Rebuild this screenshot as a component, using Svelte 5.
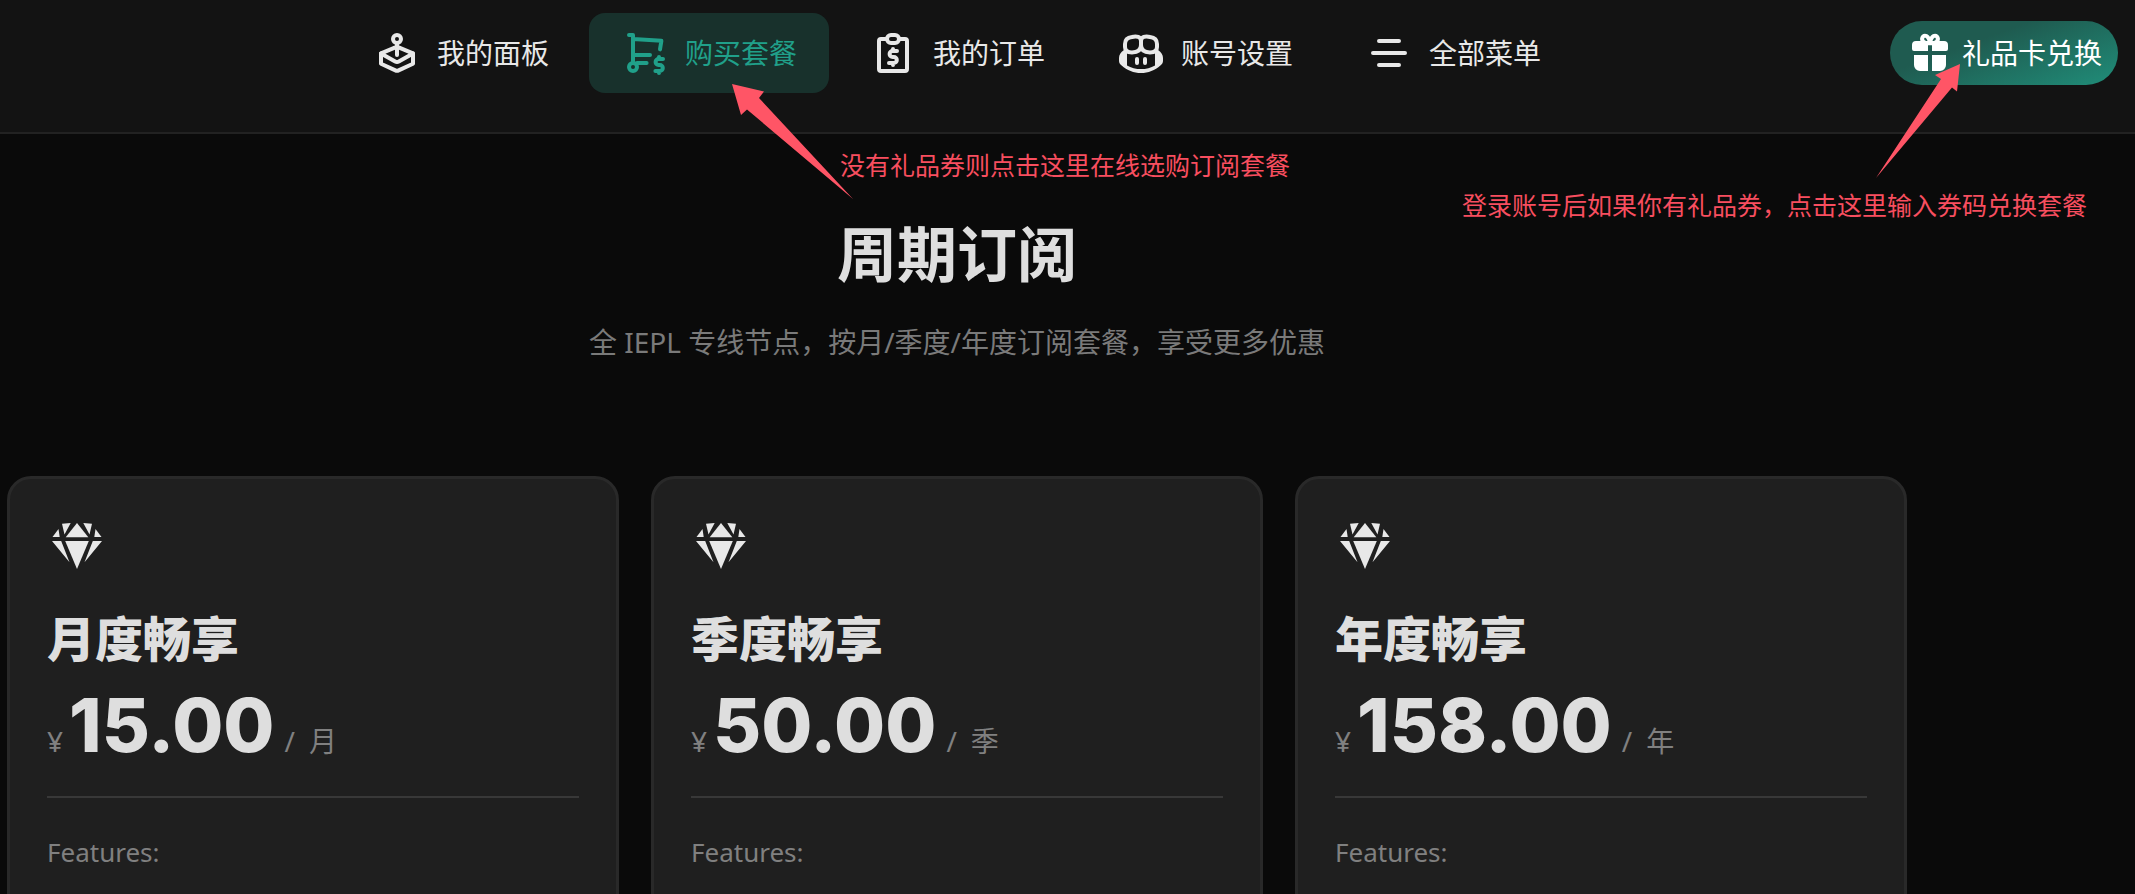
<script>
  const navItems = [
    { id: 'dashboard', label: '我的面板' },
    { id: 'shop', label: '购买套餐' },
    { id: 'orders', label: '我的订单' },
    { id: 'account', label: '账号设置' },
    { id: 'menu', label: '全部菜单' },
  ];

  const plans = [
    { name: '月度畅享', price: '15.00', unit: '月' },
    { name: '季度畅享', price: '50.00', unit: '季' },
    { name: '年度畅享', price: '158.00', unit: '年' },
  ];

  let active = $state('shop');
</script>

<div class="page">
  <header class="topbar">
    <nav class="nav">
      {#each navItems as item (item.id)}
        <a
          class="nav-item"
          class:active={active === item.id}
          href="#{item.id}"
          onclick={() => (active = item.id)}
        >
          <svg class="icon" viewBox="0 0 24 24" aria-hidden="true">
            {#if item.id === 'dashboard'}
              <circle cx="12" cy="5" r="2" />
              <path d="M12 7v6" />
              <path d="M11.2 9.2 4 12.2l7.1 4.1q.9.5 1.8 0L20 12.2l-7.2-3" />
              <path d="M4 12.2v5.2l7.2 3.3q.8.4 1.6 0l7.2-3.3v-5.2" />
            {:else if item.id === 'shop'}
              <path d="M4 3h2v14M6 5l14.2.9-.7 4.3M6 13h8.5M8 17h4.8" />
              <circle cx="6" cy="19" r="2" />
              <path d="M21 15h-2.2a1.5 1.5 0 0 0 0 3h.6a1.5 1.5 0 0 1 0 3h-2.2M19 14v1M19 21v1" />
            {:else if item.id === 'orders'}
              <path d="M9 5H6a1 1 0 0 0-1 1v14a1 1 0 0 0 1 1h12a1 1 0 0 0 1-1V6a1 1 0 0 0-1-1h-3" />
              <rect x="9" y="3" width="6" height="4" rx="2" />
              <path d="M14 11h-2.2a1.5 1.5 0 0 0 0 3h.6a1.5 1.5 0 0 1 0 3H10M12 10v1M12 17v1" />
            {:else if item.id === 'account'}
              <path d="M7.5 4C9.8 3.3 12 4 12 6v2c0 2.4-1.5 3.7-4.5 3.7C5 11.7 4 10.5 4 9V7.5C4 5.5 5.2 4.300 7.5 4z" />
              <path d="M16.5 4C14.2 3.3 12 4 12 6v2c0 2.4 1.5 3.7 4.5 3.7 2.5 0 3.5-1.2 3.5-2.7V7.5c0-2-1.200-3.200-3.500-3.500z" />
              <path
                class="solid"
                d="M3.5 10.5C1.8 11.7 1 13 1 14.5V16c0 1 .5 1.6 1.3 2.2C5 20.6 8.4 22 12 22s7-1.4 9.7-3.8c.8-.6 1.3-1.2 1.3-2.2v-1.5c0-1.5-.8-2.8-2.5-4L19 11.5v6.7c-2 1.2-4.5 1.8-7 1.8s-5-.6-7-1.8v-6.7z"
              />
              <path d="M10 15v2M14 15v2" />
            {:else}
              <path d="M7 6h10M4 12h16M7 18h10" />
            {/if}
          </svg>
          <span>{item.label}</span>
        </a>
      {/each}
    </nav>

    <button class="redeem" type="button">
      <svg class="icon" viewBox="0 0 24 24" aria-hidden="true">
        <path d="M12 7C9 7.4 7.6 5.8 8.2 4.3 9 2.5 11.4 3.2 12 7zM12 7c3 .4 4.4-1.2 3.8-2.7C15 2.5 12.6 3.2 12 7z" />
        <path class="solid" d="M5 6h14a2 2 0 0 1 2 2v2a1 1 0 0 1-1 1h-7V8h-2v3H4a1 1 0 0 1-1-1V8a2 2 0 0 1 2-2z" />
        <path class="solid" d="M4 13h7v8H7a3 3 0 0 1-3-3zM13 13h7v5a3 3 0 0 1-3 3h-4z" />
      </svg>
      <span>礼品卡兑换</span>
    </button>
  </header>

  <main>
    <section class="intro">
      <h1>周期订阅</h1>
      <p>全 IEPL 专线节点，按月/季度/年度订阅套餐，享受更多优惠</p>
    </section>

    <section class="plans">
      {#each plans as plan (plan.name)}
        <article class="card">
          <svg class="gem" viewBox="0 0 60 60" aria-hidden="true">
            <path d="M5.5 21 11.5 13l1.2 8zM54.5 21l-6-8-1.2 8z" />
            <path d="M15 7.7 23.7 7 17.5 18.5zM45 7.7 36.3 7l6.2 11.5z" />
            <path d="M30 7l11.3 14.3H18.7z" />
            <path d="M5 25h9.2l8.3 21.3zM55 25h-9.2l-8.3 21.3z" />
            <path d="M18.2 25h23.6L30 53z" />
          </svg>
          <h2>{plan.name}</h2>
          <div class="price">
            <span>¥</span>
            <strong>{plan.price}</strong>
            <span class="slash">/</span>
            <span>{plan.unit}</span>
          </div>
          <hr />
          <p class="features">Features:</p>
        </article>
      {/each}
    </section>
  </main>

  <!-- guide arrows and hints over the page -->
  <svg class="arrow arrow-shop" viewBox="0 0 122 116" aria-hidden="true">
    <path d="M0 0 32 7.5 27 14 121 115 15 25.5 9 31z" />
  </svg>
  <p class="hint hint-shop">没有礼品券则点击这里在线选购订阅套餐</p>

  <svg class="arrow arrow-redeem" viewBox="0 0 84 114" aria-hidden="true">
    <path d="M84 0 59 11 65 15 0 114 76 23.5 81 27.5z" />
  </svg>
  <p class="hint hint-redeem">登录账号后如果你有礼品券，点击这里输入券码兑换套餐</p>
</div>

<style>
  :global(body) {
    margin: 0;
    background: #0a0a0a;
  }
  .page {
    position: relative;
    height: 100vh;
    overflow: hidden;
    color: #dedede;
    font-family: 'Noto Sans', 'Noto Sans CJK SC', sans-serif;
    font-size: 28px;
    line-height: 40px;
  }
  h1, h2, p { margin: 0; }

  .topbar {
    display: flex;
    align-items: center;
    padding: 13px 17px 39px 24px;
    background: #131313;
    border-bottom: 2px solid #222222;
  }
  .nav {
    flex: 1;
    display: flex;
    justify-content: center;
    gap: 8px;
  }
  .nav-item {
    display: flex;
    align-items: center;
    gap: 16px;
    padding: 16px 32px;
    border-radius: 16px;
    color: #e8e8e8;
    text-decoration: none;
    white-space: nowrap;
  }
  .nav-item.active { background: #18312c; color: #20a08a; }

  .icon {
    width: 48px;
    height: 48px;
    fill: none;
    stroke: currentColor;
    stroke-width: 2;
    stroke-linecap: round;
    stroke-linejoin: round;
  }
  .icon .solid { fill: currentColor; stroke: none; }

  .redeem {
    display: flex;
    align-items: center;
    gap: 8px;
    padding: 8px 16px;
    border: 0;
    border-radius: 32px;
    background: linear-gradient(160deg, #1f5b50 35%, #208d79);
    color: #ffffff;
    font: inherit;
    white-space: nowrap;
    cursor: pointer;
  }

  main { padding: 0 228px 0 7px; }
  .intro {
    padding: 80px 0 114px;
    text-align: center;
  }
  .intro h1 {
    font-size: 60px;
    line-height: 80px;
    font-weight: 700;
  }
  .intro p {
    margin-top: 28px;
    color: #7a7a7a;
  }

  .plans {
    display: grid;
    grid-template-columns: repeat(3, 1fr);
    gap: 32px;
  }
  .card {
    padding: 37px 37px 80px;
    background: #1f1f1f;
    border: 3px solid #292929;
    border-radius: 24px;
  }
  .gem {
    display: block;
    width: 60px;
    height: 60px;
    fill: #e8e8e8;
  }
  .card h2 {
    margin-top: 33px;
    font-size: 48px;
    line-height: 60px;
    font-weight: 800;
  }
  .price {
    display: flex;
    align-items: baseline;
    gap: 6px;
    color: #808080;
  }
  .price strong {
    color: #dedede;
    font-family: Inter, sans-serif;
    font-size: 74px;
    line-height: 112px;
    font-weight: 800;
  }
  .price .slash { margin: 0 8px 0 4px; }
  .card hr {
    height: 2px;
    margin: 15px 0 34px;
    border: 0;
    background: #383838;
  }
  .features {
    color: #808080;
    font-size: 26px;
  }

  .arrow { position: absolute; fill: #ff5566; }
  .arrow-shop { top: 84px; left: 732px; width: 122px; height: 116px; }
  .arrow-redeem { top: 64px; right: 175px; width: 84px; height: 114px; }
  .hint {
    position: absolute;
    color: #f84e5f;
    font-size: 25px;
    line-height: 36px;
    white-space: nowrap;
  }
  .hint-shop { top: 147px; left: 840px; }
  .hint-redeem { top: 187px; right: 48px; }
</style>
